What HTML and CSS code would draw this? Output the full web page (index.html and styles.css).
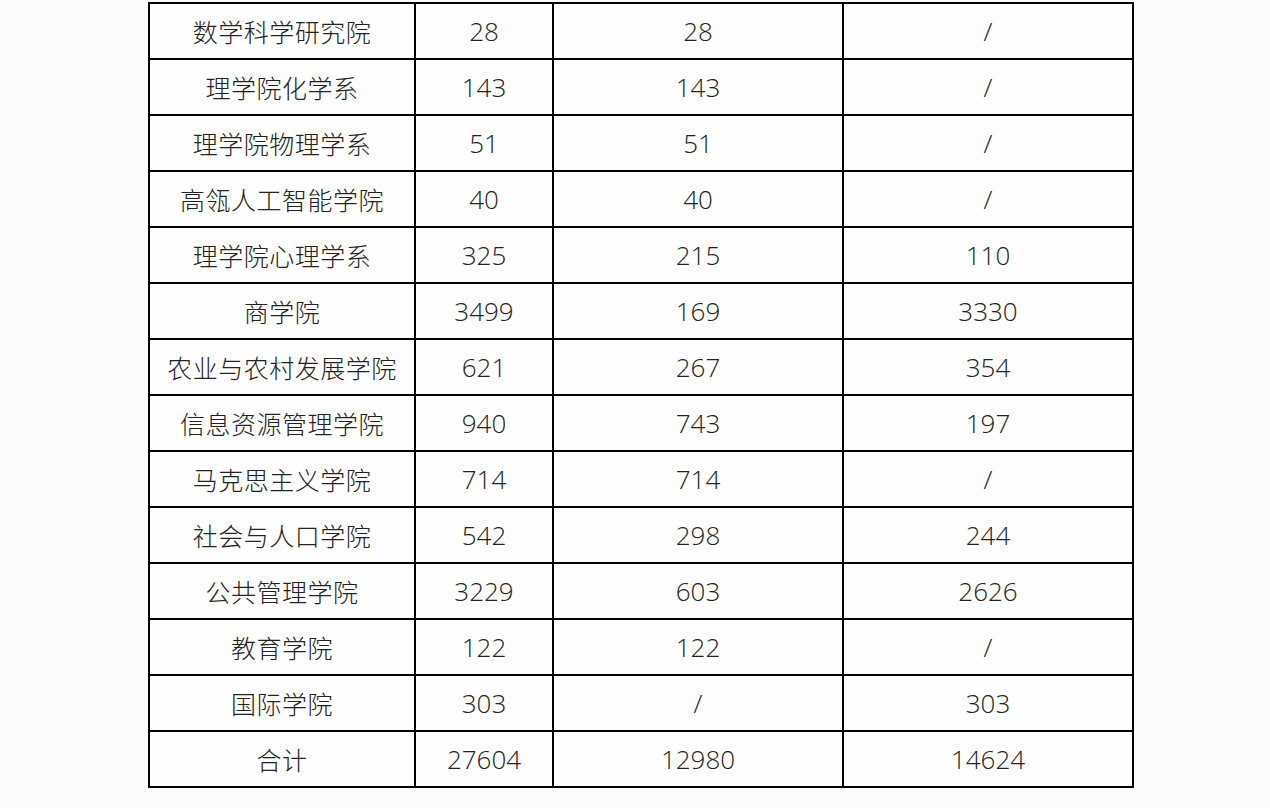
FILE: index.html
```html
<!DOCTYPE html>
<html lang="zh-CN">
<head>
<meta charset="utf-8">
<title>表</title>
<link rel="stylesheet" href="styles.css">
</head>
<body>
<div class="table">
  <div class="cell name">数学科学研究院</div><div class="cell">28</div><div class="cell">28</div><div class="cell">/</div>
  <div class="cell name">理学院化学系</div><div class="cell">143</div><div class="cell">143</div><div class="cell">/</div>
  <div class="cell name">理学院物理学系</div><div class="cell">51</div><div class="cell">51</div><div class="cell">/</div>
  <div class="cell name">高瓴人工智能学院</div><div class="cell">40</div><div class="cell">40</div><div class="cell">/</div>
  <div class="cell name">理学院心理学系</div><div class="cell">325</div><div class="cell">215</div><div class="cell">110</div>
  <div class="cell name">商学院</div><div class="cell">3499</div><div class="cell">169</div><div class="cell">3330</div>
  <div class="cell name">农业与农村发展学院</div><div class="cell">621</div><div class="cell">267</div><div class="cell">354</div>
  <div class="cell name">信息资源管理学院</div><div class="cell">940</div><div class="cell">743</div><div class="cell">197</div>
  <div class="cell name">马克思主义学院</div><div class="cell">714</div><div class="cell">714</div><div class="cell">/</div>
  <div class="cell name">社会与人口学院</div><div class="cell">542</div><div class="cell">298</div><div class="cell">244</div>
  <div class="cell name">公共管理学院</div><div class="cell">3229</div><div class="cell">603</div><div class="cell">2626</div>
  <div class="cell name">教育学院</div><div class="cell">122</div><div class="cell">122</div><div class="cell">/</div>
  <div class="cell name">国际学院</div><div class="cell">303</div><div class="cell">/</div><div class="cell">303</div>
  <div class="cell name">合计</div><div class="cell">27604</div><div class="cell">12980</div><div class="cell">14624</div>
</div>
</body>
</html>
```

FILE: styles.css
```css
html, body {
  margin: 0;
  padding: 0;
  background: #fbfbfb;
}
body {
  padding: 2px 0 0 148px;
  font-family: "Open Sans", "Noto Sans CJK SC", sans-serif;
  color: #222;
}
.table {
  display: grid;
  grid-template-columns: 264px 136px 288px 288px;
  grid-auto-rows: 54px;
  gap: 2px;
  padding: 2px;
  background: #000;
  width: max-content;
}
.cell {
  background: #fefefe;
  display: flex;
  align-items: center;
  justify-content: center;
  font-size: 26px;
  font-weight: 300;
  line-height: 1;
}
.name {
  font-family: "Noto Sans CJK SC", sans-serif;
  font-size: 25px;
  font-weight: 300;
  letter-spacing: 0.5px;
}
```
